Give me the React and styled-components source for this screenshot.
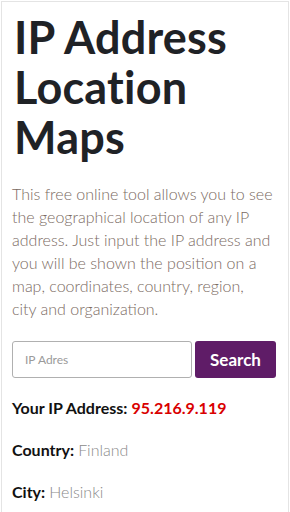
import React from 'react';
import styled, { createGlobalStyle } from 'styled-components';

const GlobalStyle = createGlobalStyle`
  html, body {
    margin: 0;
    padding: 0;
    background: #ffffff;
  }
  body {
    font-family: Lato, 'Open Sans', sans-serif;
  }
`;

const App = () => {
  return (
    <Page>
      <GlobalStyle />
      <Card>
        <Title>IP Address Location Maps</Title>
        <Intro>
          This free online tool allows you to see the geographical location of
          any IP address. Just input the IP address and you will be shown the
          position on a map, coordinates, country, region,{' '}
          <NoWrap>city and organization.</NoWrap>
        </Intro>
        <SearchRow>
          <Input placeholder='IP Adres' />
          <Button>Search</Button>
        </SearchRow>
        <Info>
          <Row>
            <Label>Your IP Address:</Label> <Ip>95.216.9.119</Ip>
          </Row>
          <Row>
            <Label>Country:</Label> <Value>Finland</Value>
          </Row>
          <Row>
            <Label>City:</Label> <Value>Helsinki</Value>
          </Row>
        </Info>
      </Card>
    </Page>
  );
};

const Page = styled.div`
  padding: 1px 1px 0;
  height: 512px;
  box-sizing: border-box;
  overflow: hidden;
`;

const Card = styled.div`
  border: 1px solid #e4e4e4;
  border-bottom: none;
  padding: 10px 10px 0;
  min-height: 520px;
`;

const Title = styled.h1`
  margin: 0 0 0 2px;
  font-size: 45px;
  line-height: 50px;
  font-weight: 700;
  color: #1f2226;
  letter-spacing: 0.2px;
`;

const Intro = styled.p`
  margin: 20px 0 0;
  font-size: 16px;
  line-height: 23px;
  font-weight: 300;
  color: #7a6a62;
`;

const NoWrap = styled.span`
  white-space: nowrap;
`;

const SearchRow = styled.div`
  display: flex;
  gap: 3px;
  margin-top: 21px;
  width: 264px;
`;

const Input = styled.input`
  flex: 1;
  min-width: 0;
  height: 37px;
  box-sizing: border-box;
  border: 1px solid #b0b0b0;
  border-radius: 3px;
  padding: 0 12px;
  font-family: Lato, sans-serif;
  font-size: 12px;
  color: #333;
  &::placeholder {
    color: #9a9a9a;
  }
`;

const Button = styled.button`
  width: 81px;
  height: 37px;
  border: none;
  border-radius: 3px;
  background: #5f1c67;
  color: #ffffff;
  font-family: Lato, sans-serif;
  font-weight: 700;
  font-size: 17px;
`;

const Info = styled.div`
  display: flex;
  flex-direction: column;
  gap: 23px;
  margin-top: 20px;
`;

const Row = styled.div`
  font-size: 16px;
  line-height: 19px;
`;

const Label = styled.span`
  font-weight: 700;
  color: #111111;
`;

const Ip = styled.span`
  font-weight: 700;
  color: #d90000;
`;

const Value = styled.span`
  font-weight: 300;
  color: #8a8a8a;
`;

export default App;
